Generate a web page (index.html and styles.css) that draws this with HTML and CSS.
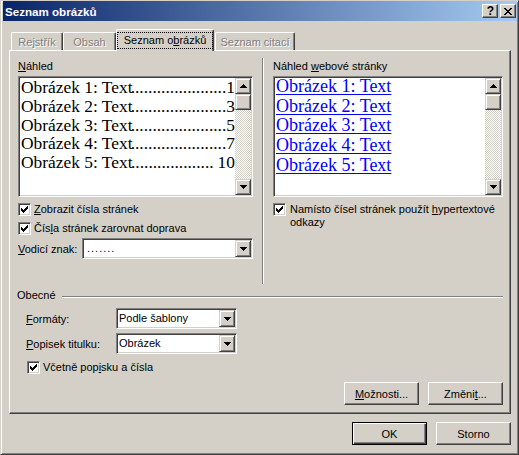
FILE: index.html
```html
<!DOCTYPE html>
<html lang="cs">
<head>
<meta charset="utf-8">
<title>Seznam obrázků</title>
<link rel="stylesheet" href="styles.css">
</head>
<body>
<div class="window">
  <div class="titlebar">
    <span class="title">Seznam obrázků</span>
    <div class="caption-btns">
      <span class="cbtn help">?</span>
      <span class="cbtn close"><svg width="8" height="7" viewBox="0 0 8 7"><path d="M0 0h2v1h-2z M6 0h2v1h-2z M1 1h2v1h-2z M5 1h2v1h-2z M2 2h4v1h-4z M3 3h2v1h-2z M2 4h4v1h-4z M1 5h2v1h-2z M5 5h2v1h-2z M0 6h2v1h-2z M6 6h2v1h-2z" fill="#000"/></svg></span>
    </div>
  </div>

  <div class="tabs">
    <span class="tab t1">Rejstřík</span>
    <span class="tab t2">Obsah</span>
    <span class="tab sel"><span class="focus">Seznam o<u>b</u>rázků</span></span>
    <span class="tab t4">Seznam citací</span>
  </div>

  <div class="panel">
    <div class="cols">
      <div class="col left">
        <div class="label"><u>N</u>áhled</div>
        <div class="preview">
          <div class="lines">
            <div class="line"><span class="ltext">Obrázek 1: Text</span><span class="dots">........................................</span><span class="pn">1</span></div>
            <div class="line"><span class="ltext">Obrázek 2: Text</span><span class="dots">........................................</span><span class="pn">3</span></div>
            <div class="line"><span class="ltext">Obrázek 3: Text</span><span class="dots">........................................</span><span class="pn">5</span></div>
            <div class="line"><span class="ltext">Obrázek 4: Text</span><span class="dots">........................................</span><span class="pn">7</span></div>
            <div class="line"><span class="ltext">Obrázek 5: Text</span><span class="dots">........................................</span><span class="pn wide">10</span></div>
          </div>
          <div class="vscroll">
            <span class="sbtn"><svg width="7" height="4" viewBox="0 0 7 4"><path d="M3 0h1v1h1v1h1v1h1v1h-7v-1h1v-1h1v-1h1z" fill="#000"/></svg></span>
            <span class="thumb"></span>
            <span class="track"></span>
            <span class="sbtn"><svg width="7" height="4" viewBox="0 0 7 4"><path d="M0 0h7v1h-1v1h-1v1h-1v1h-1v-1h-1v-1h-1v-1h-1z" fill="#000"/></svg></span>
          </div>
        </div>
        <div class="check r1">
          <span class="cb"><svg width="7" height="7" viewBox="0 0 7 7"><path d="M6 0h1v3h-1z M5 1h1v3h-1z M4 2h1v3h-1z M3 3h1v3h-1z M2 4h1v3h-1z M1 3h1v3h-1z M0 2h1v3h-1z" fill="#000"/></svg></span>
          <span><u>Z</u>obrazit čísla stránek</span>
        </div>
        <div class="check r2">
          <span class="cb"><svg width="7" height="7" viewBox="0 0 7 7"><path d="M6 0h1v3h-1z M5 1h1v3h-1z M4 2h1v3h-1z M3 3h1v3h-1z M2 4h1v3h-1z M1 3h1v3h-1z M0 2h1v3h-1z" fill="#000"/></svg></span>
          <span>Čís<u>l</u>a stránek zarovnat doprava</span>
        </div>
        <div class="frow leader-row">
          <span class="flabel lead-label"><u>V</u>odicí znak:</span>
          <div class="combo lead-combo">
            <span class="ctext dotted">.......</span>
            <span class="dbtn"><svg width="7" height="4" viewBox="0 0 7 4"><path d="M0 0h7v1h-1v1h-1v1h-1v1h-1v-1h-1v-1h-1v-1h-1z" fill="#000"/></svg></span>
          </div>
        </div>
      </div>

      <div class="vsep"></div>

      <div class="col right">
        <div class="label">Náhled <u>w</u>ebové stránky</div>
        <div class="preview">
          <div class="lines links">
            <div class="line"><a class="lk">Obrázek 1: Text</a></div>
            <div class="line"><a class="lk">Obrázek 2: Text</a></div>
            <div class="line"><a class="lk">Obrázek 3: Text</a></div>
            <div class="line"><a class="lk">Obrázek 4: Text</a></div>
            <div class="line"><a class="lk">Obrázek 5: Text</a></div>
          </div>
          <div class="vscroll">
            <span class="sbtn"><svg width="7" height="4" viewBox="0 0 7 4"><path d="M3 0h1v1h1v1h1v1h1v1h-7v-1h1v-1h1v-1h1z" fill="#000"/></svg></span>
            <span class="thumb"></span>
            <span class="track"></span>
            <span class="sbtn"><svg width="7" height="4" viewBox="0 0 7 4"><path d="M0 0h7v1h-1v1h-1v1h-1v1h-1v-1h-1v-1h-1v-1h-1z" fill="#000"/></svg></span>
          </div>
        </div>
        <div class="check multi r1">
          <span class="cb"><svg width="7" height="7" viewBox="0 0 7 7"><path d="M6 0h1v3h-1z M5 1h1v3h-1z M4 2h1v3h-1z M3 3h1v3h-1z M2 4h1v3h-1z M1 3h1v3h-1z M0 2h1v3h-1z" fill="#000"/></svg></span>
          <span>Namísto čísel stránek použít <u>h</u>ypertextové<br>odkazy</span>
        </div>
      </div>
    </div>

    <div class="group-head">
      <span>Obecné</span>
      <span class="hline"></span>
    </div>

    <div class="frow f1">
      <span class="flabel"><u>F</u>ormáty:</span>
      <div class="combo">
        <span class="ctext">Podle šablony</span>
        <span class="dbtn"><svg width="7" height="4" viewBox="0 0 7 4"><path d="M0 0h7v1h-1v1h-1v1h-1v1h-1v-1h-1v-1h-1v-1h-1z" fill="#000"/></svg></span>
      </div>
    </div>
    <div class="frow f2">
      <span class="flabel"><u>P</u>opisek titulku:</span>
      <div class="combo">
        <span class="ctext">Obrázek</span>
        <span class="dbtn"><svg width="7" height="4" viewBox="0 0 7 4"><path d="M0 0h7v1h-1v1h-1v1h-1v1h-1v-1h-1v-1h-1v-1h-1z" fill="#000"/></svg></span>
      </div>
    </div>
    <div class="check incl">
      <span class="cb"><svg width="7" height="7" viewBox="0 0 7 7"><path d="M6 0h1v3h-1z M5 1h1v3h-1z M4 2h1v3h-1z M3 3h1v3h-1z M2 4h1v3h-1z M1 3h1v3h-1z M0 2h1v3h-1z" fill="#000"/></svg></span>
      <span>Včetně pop<u>i</u>sku a čísla</span>
    </div>

    <div class="btn-row">
      <button class="btn"><u>M</u>ožnosti...</button>
      <button class="btn">Změni<u>t</u>...</button>
    </div>
  </div>

  <div class="dlg-btns">
    <button class="btn default">OK</button>
    <button class="btn">Storno</button>
  </div>
</div>
</body>
</html>
```

FILE: styles.css
```css
* { box-sizing: border-box; }

html, body {
  margin: 0;
  padding: 0;
  background: #d4d0c8;
}

body {
  font-family: "Liberation Sans", Arial, sans-serif;
  font-size: 11px;
  color: #000;
}

u { text-decoration: underline; text-underline-offset: 1px; }

.window {
  width: 519px;
  height: 455px;
  background: #d4d0c8;
  border: 1px solid;
  border-color: #d4d0c8 #404040 #404040 #d4d0c8;
  box-shadow: inset 1px 1px #fff, inset -1px -1px #808080;
  padding: 0 1px 2px 2px;
  display: flex;
  flex-direction: column;
}

/* title bar */
.titlebar {
  height: 20px;
  flex: none;
  display: flex;
  align-items: center;
  justify-content: space-between;
  background: linear-gradient(to right, #0a246a, #a6caf0);
  padding: 0 1px 0 2px;
}
.title {
  color: #fff;
  font-weight: bold;
  font-size: 11.6px;
}
.caption-btns { display: flex; gap: 2px; }
.cbtn {
  width: 16px;
  height: 14px;
  background: #d4d0c8;
  border: 1px solid;
  border-color: #fff #404040 #404040 #fff;
  box-shadow: inset -1px -1px #808080;
  display: flex;
  align-items: center;
  justify-content: center;
}
.cbtn.help {
  font-weight: bold;
  font-size: 12px;
  line-height: 12px;
  padding-left: 1px;
}
.cbtn svg { display: block; shape-rendering: crispEdges; }

/* tabs */
.tabs {
  flex: none;
  display: flex;
  align-items: flex-end;
  height: 21px;
  margin: 8px 0 0 6px;
  padding-left: 2px;
}
.tab {
  height: 18px;
  border: 1px solid;
  border-bottom: none;
  border-color: #fff #404040 #fff #fff;
  box-shadow: inset -1px 0 #808080;
  border-radius: 2px 2px 0 0;
  display: flex;
  align-items: center;
  justify-content: center;
  color: #808080;
  text-shadow: 1px 1px #fff;
  background: #d4d0c8;
}
.t1 { width: 52px; }
.t2 { width: 53px; }
.t4 { width: 80px; margin-left: 1px; }
.tab.sel {
  width: 98px;
  height: 22px;
  margin-bottom: -1px;
  position: relative;
  z-index: 1;
  color: #000;
  text-shadow: none;
}
.focus {
  display: inline-block;
  outline: 1px dotted #000;
  line-height: 15px;
  height: 15px;
  padding: 0 6px;
}

/* panel */
.panel {
  flex: none;
  width: 502px;
  height: 364px;
  margin-left: 6px;
  border: 1px solid;
  border-color: #fff #404040 #404040 #fff;
  box-shadow: inset -1px -1px #808080;
  padding: 7px 7px 8px 8px;
  display: flex;
  flex-direction: column;
}

.cols {
  height: 226px;
  display: flex;
  flex: none;
}
.col { display: flex; flex-direction: column; }
.col.left { width: 235px; }
.col.right { flex: 1; }
.vsep {
  width: 2px;
  border-left: 1px solid #808080;
  border-right: 1px solid #fff;
  margin: 0 9px;
}

.label {
  margin-top: 2px;
  line-height: 13px;
  height: 13px;
}

.preview {
  margin-top: 3px;
  height: 121px;
  border: 1px solid;
  border-color: #808080 #fff #fff #808080;
  box-shadow: inset 1px 1px #404040, inset -1px -1px #d4d0c8;
  background: #fff;
  padding: 1px;
  display: flex;
}
.lines {
  flex: 1;
  min-width: 0;
  overflow: hidden;
  font-family: "Liberation Serif", "Times New Roman", serif;
  font-size: 17.4px;
  line-height: 18.8px;
  padding-left: 1px;
}
.line {
  display: flex;
  white-space: nowrap;
}
.ltext { flex: none; }
.dots {
  flex: 1;
  min-width: 0;
  overflow: hidden;
  direction: rtl;
  white-space: nowrap;
}
.pn { flex: none; }
.pn.wide { margin-left: 4px; }

.lines.links {
  font-size: 18px;
  line-height: 19.7px;
  padding-left: 1px;
}
.lines.links .line { margin-top: 0; }
.lines.links .line:first-child { margin-top: -1px; }
.lk {
  color: #00f;
  text-decoration: underline;
  text-underline-offset: 2px;
}

.vscroll {
  width: 16px;
  flex: none;
  display: flex;
  flex-direction: column;
}
.sbtn, .thumb, .dbtn {
  background: #d4d0c8;
  border: 1px solid;
  border-color: #d4d0c8 #404040 #404040 #d4d0c8;
  box-shadow: inset 1px 1px #fff, inset -1px -1px #808080;
  display: flex;
  align-items: center;
  justify-content: center;
}
.sbtn { height: 16px; flex: none; }
.thumb { height: 16px; flex: none; }
.track {
  flex: 1;
  background-color: #fff;
  background-image: repeating-conic-gradient(#d4d0c8 0 25%, #fff 0 50%);
  background-size: 2px 2px;
}
.sbtn svg, .dbtn svg, .cb svg { display: block; shape-rendering: crispEdges; }

/* checkboxes */
.check {
  display: flex;
  align-items: center;
  gap: 3px;
  line-height: 13px;
}
.check.multi { align-items: flex-start; gap: 4px; }
.check.r1 { margin-top: 6px; }
.check.r2 { margin-top: 6px; }
.cb {
  width: 13px;
  height: 13px;
  flex: none;
  border: 1px solid;
  border-color: #808080 #fff #fff #808080;
  box-shadow: inset 1px 1px #404040, inset -1px -1px #d4d0c8;
  background: #fff;
  display: flex;
  align-items: center;
  justify-content: center;
}

/* form rows & combos */
.frow {
  display: flex;
  align-items: center;
}
.flabel { width: 90px; flex: none; }
.leader-row { margin-top: 3px; }
.lead-label { width: 64px; }
.combo {
  height: 21px;
  width: 121px;
  border: 1px solid;
  border-color: #808080 #fff #fff #808080;
  box-shadow: inset 1px 1px #404040, inset -1px -1px #d4d0c8;
  background: #fff;
  padding: 1px;
  display: flex;
}
.lead-combo { width: 171px; }
.ctext {
  flex: 1;
  line-height: 17px;
  padding-left: 1px;
  white-space: nowrap;
  overflow: hidden;
}
.ctext.dotted { padding-left: 3px; letter-spacing: 1px; }
.dbtn { width: 16px; height: 17px; flex: none; }

.group-head {
  margin: 5px 0 0 -1px;
  display: flex;
  align-items: flex-start;
  line-height: 13px;
}
.hline {
  flex: 1;
  height: 2px;
  margin: 7px 0 0 6px;
  border-top: 1px solid #808080;
  border-bottom: 1px solid #fff;
}

.f1 { margin-top: 6px; padding-left: 8px; }
.f2 { margin-top: 4px; padding-left: 8px; }
.check.incl { margin-top: 7px; padding-left: 9px; }

/* buttons */
.btn {
  width: 75px;
  height: 23px;
  padding: 0;
  margin: 0;
  font: inherit;
  color: #000;
  background: #d4d0c8;
  border: 1px solid;
  border-color: #fff #404040 #404040 #fff;
  box-shadow: inset -1px -1px #808080;
  border-radius: 0;
  display: flex;
  align-items: center;
  justify-content: center;
}
.btn.default {
  border-color: #000;
  box-shadow: inset 1px 1px #fff, inset -1px -1px #404040, inset -2px -2px #808080;
}
.btn-row {
  margin-top: auto;
  display: flex;
  justify-content: flex-end;
  gap: 9px;
}
.dlg-btns {
  margin: 8px 6px 0 0;
  display: flex;
  justify-content: flex-end;
  gap: 9px;
}
```
